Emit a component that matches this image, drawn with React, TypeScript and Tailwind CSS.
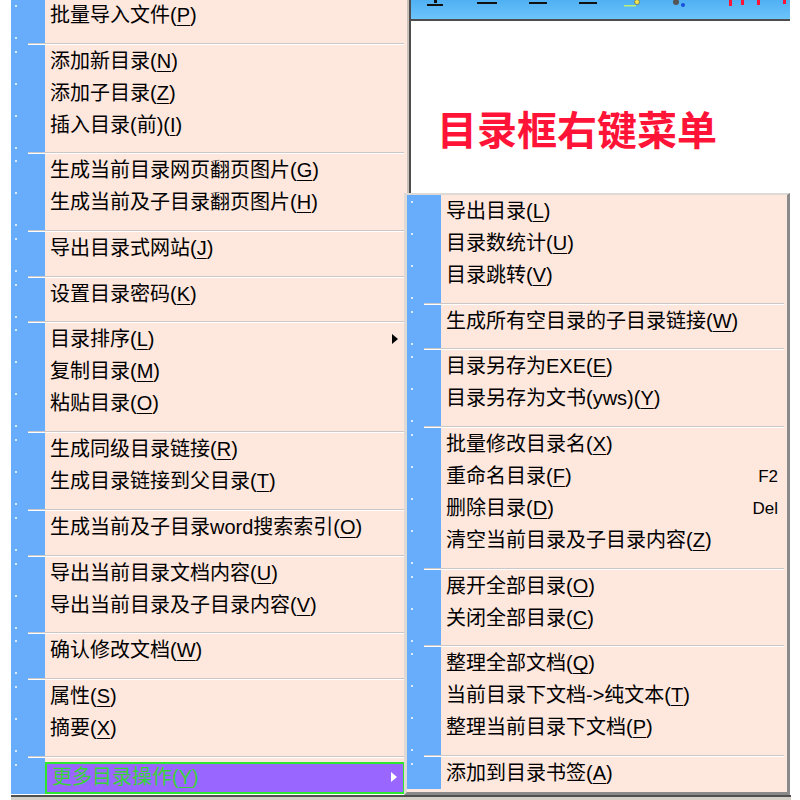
import React from "react";

type Item =
  | { sep: true }
  | { t: string; k: string; arrow?: boolean; hover?: boolean; sc?: string };

const S: Item = { sep: true };

const leftItems: Item[] = [
  { t: "批量导入文件", k: "P" },
  S,
  { t: "添加新目录", k: "N" },
  { t: "添加子目录", k: "Z" },
  { t: "插入目录(前)", k: "I" },
  S,
  { t: "生成当前目录网页翻页图片", k: "G" },
  { t: "生成当前及子目录翻页图片", k: "H" },
  S,
  { t: "导出目录式网站", k: "J" },
  S,
  { t: "设置目录密码", k: "K" },
  S,
  { t: "目录排序", k: "L", arrow: true },
  { t: "复制目录", k: "M" },
  { t: "粘贴目录", k: "O" },
  S,
  { t: "生成同级目录链接", k: "R" },
  { t: "生成目录链接到父目录", k: "T" },
  S,
  { t: "生成当前及子目录word搜索索引", k: "O" },
  S,
  { t: "导出当前目录文档内容", k: "U" },
  { t: "导出当前目录及子目录内容", k: "V" },
  S,
  { t: "确认修改文档", k: "W" },
  S,
  { t: "属性", k: "S" },
  { t: "摘要", k: "X" },
  S,
  { t: "更多目录操作", k: "Y", arrow: true, hover: true },
];

const rightItems: Item[] = [
  { t: "导出目录", k: "L" },
  { t: "目录数统计", k: "U" },
  { t: "目录跳转", k: "V" },
  S,
  { t: "生成所有空目录的子目录链接", k: "W" },
  S,
  { t: "目录另存为EXE", k: "E" },
  { t: "目录另存为文书(yws)", k: "Y" },
  S,
  { t: "批量修改目录名", k: "X" },
  { t: "重命名目录", k: "F", sc: "F2" },
  { t: "删除目录", k: "D", sc: "Del" },
  { t: "清空当前目录及子目录内容", k: "Z" },
  S,
  { t: "展开全部目录", k: "O" },
  { t: "关闭全部目录", k: "C" },
  S,
  { t: "整理全部文档", k: "Q" },
  { t: "当前目录下文档->纯文本", k: "T" },
  { t: "整理当前目录下文档", k: "P" },
  S,
  { t: "添加到目录书签", k: "A" },
];

const Strip = () => (
  <div className="relative h-full w-[34px] shrink-0 bg-[#67adfc]">
    <span className="absolute left-[4px] top-[6px] h-[2px] w-[2px] bg-[#d9ecff]" />
  </div>
);

const Label = ({ t, k }: { t: string; k: string }) => (
  <span className="whitespace-nowrap">
    {t}(<span className="underline underline-offset-[3px] decoration-1">{k}</span>)
  </span>
);

const Arrow = ({ white }: { white?: boolean }) => (
  <svg width="6" height="10" viewBox="0 0 6 10" className="shrink-0">
    <polygon points="0,0 6,5 0,10" fill={white ? "#ffffff" : "#000000"} />
  </svg>
);

function Row({ item }: { item: Item }) {
  if ("sep" in item) {
    return (
      <div className="relative flex h-[13.7px]">
        <Strip />
        <div className="flex-1 bg-[#fee7dd]" />
        <div className="absolute bottom-[0px] left-[17px] right-[3px] h-[2px] border-t border-b border-t-[#cdc6c6] border-b-[#ffffff]" />
      </div>
    );
  }
  if (item.hover) {
    return (
      <div className="flex h-[36px]">
        <Strip />
        <div className="flex flex-1 flex-col bg-[#fee7dd] pt-[4px]">
          <div className="mr-[2px] flex h-[32px] items-center justify-between border-2 border-[#2ee82e] bg-[#9966ff] pb-[2px] pl-[5px] pr-[6px] text-[#3ad23a]">
            <Label t={item.t} k={item.k} />
            <Arrow white />
          </div>
        </div>
      </div>
    );
  }
  return (
    <div className="flex h-[32px]">
      <Strip />
      <div className="flex flex-1 items-center justify-between bg-[#fee7dd] pl-[5px] pr-[9px] text-black">
        <Label t={item.t} k={item.k} />
        {item.arrow && <Arrow />}
        {item.sc && (
          <span className="text-[17px] font-['Liberation_Sans',sans-serif]">{item.sc}</span>
        )}
      </div>
    </div>
  );
}

export default function App() {
  return (
    <div className="relative h-[800px] w-[800px] overflow-hidden bg-white font-['Liberation_Sans','Noto_Sans_CJK_SC',sans-serif] text-[20px] leading-none">
      {/* background application window */}
      <div className="absolute left-[409px] top-0 flex h-[260px] w-[381px] flex-col border-l-2 border-[#4d4d4d] bg-white">
        <div className="h-[21px] shrink-0 border-b-2 border-[#4d4d4d] bg-gradient-to-b from-[#4fb0f2] to-[#6cc4fb]">
          <svg width="379" height="19" viewBox="0 0 379 19">
            <rect x="23" y="0" width="3" height="3" fill="#111" />
            <rect x="16" y="4" width="16" height="2" fill="#111" />
            <rect x="66" y="2" width="20" height="2" fill="#111" />
            <rect x="118" y="2" width="18" height="2" fill="#111" />
            <rect x="168" y="2" width="18" height="2" fill="#111" />
            <circle cx="226" cy="2" r="2.5" fill="#f2e64a" stroke="#555" strokeWidth="0.6" />
            <rect x="213" y="5" width="12" height="1.5" fill="#b8f07a" />
            <circle cx="265" cy="2" r="3" fill="#555" />
            <circle cx="272" cy="5" r="2" fill="#1a4fd8" />
            <rect x="318" y="0" width="3" height="6" fill="#ff1438" />
            <rect x="330" y="0" width="3" height="5" fill="#ff1438" />
            <rect x="346" y="0" width="3" height="5" fill="#ff1438" />
            <rect x="372" y="0" width="3" height="4" fill="#ff1438" />
          </svg>
        </div>
        <div className="pl-[26px] pt-[87px]">
          <div className="text-[40px] font-semibold leading-none text-[#ff1438] font-['Noto_Sans_CJK_SC',sans-serif]">
            目录框右键菜单
          </div>
        </div>
      </div>

      {/* left context menu */}
      <div className="absolute left-[11px] top-[-1px] flex w-[398px] flex-col border-r-2 border-[#c9c0bc] bg-[#fee7dd]">
        {leftItems.map((it, i) => (
          <Row key={i} item={it} />
        ))}
      </div>

      {/* right submenu */}
      <div className="absolute left-[404px] top-[193px] z-10 flex w-[386px] flex-col border-b-[3px] border-l-[3px] border-r-[3px] border-t-[2px] border-b-[#8a8a8a] border-l-[#dedad6] border-r-[#8a8a8a] border-t-[#dedad6] bg-[#fee7dd] pb-[3px]">
        {rightItems.map((it, i) => (
          <Row key={i} item={it} />
        ))}
      </div>

      {/* bottom frame */}
      <div className="absolute left-[11px] top-[795px] h-[5px] w-[780px] border-t-2 border-[#505050] bg-[#d4d0c8]" />
    </div>
  );
}
